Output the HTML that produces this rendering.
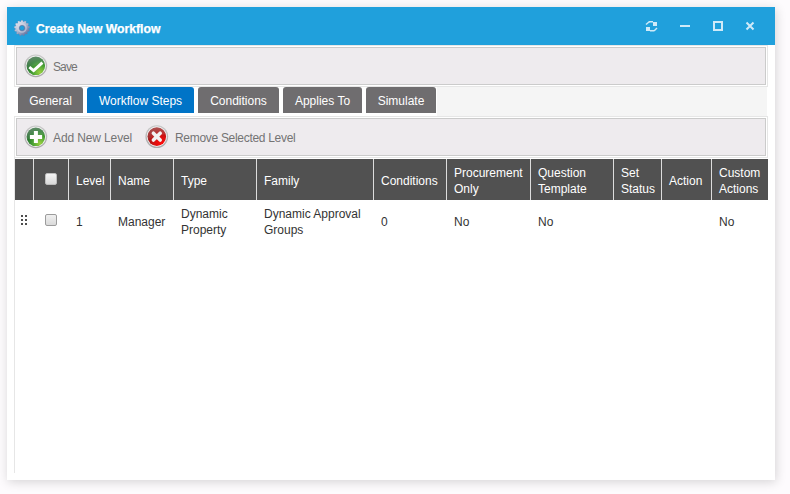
<!DOCTYPE html>
<html><head><meta charset="utf-8">
<style>
*{box-sizing:border-box;margin:0;padding:0}
html,body{width:790px;height:494px;overflow:hidden;background:#fdfbfd;font-family:"Liberation Sans",sans-serif}
.a{position:absolute}
.win{left:7px;top:7px;width:768px;height:473px;background:#fff;box-shadow:1px 2px 10px rgba(0,0,0,0.16)}
.title{left:7px;top:7px;width:768px;height:38px;background:#20a0dc}
.ttext{left:36px;top:21px;font-size:12.2px;font-weight:bold;color:#fff;-webkit-text-stroke:0.25px #fff;line-height:17px;white-space:nowrap}
.outer{border:1px solid #e6e6e6;background:#fff}
.tb{border:1px solid #cbcbcb;background:#eeebee}
.tbtxt{font-size:12px;color:#747474;line-height:14px;white-space:nowrap}
.tab{top:87px;height:26px;background:#6f6d6f;border-radius:3px 3px 0 0;color:#fff;font-size:12px;line-height:28px;text-align:center;white-space:nowrap}
.tab.act{background:#0074c7}
.hdr{left:15px;top:159px;width:753px;height:41px;background:#515151}
.sep{top:159px;width:1px;height:41px;background:#dcdcdc}
.ht{color:#fff;font-size:12px;line-height:16px;white-space:nowrap}
.ct{color:#333;font-size:12px;line-height:16px;white-space:nowrap}
</style></head><body>
<div class="a win"></div>
<div class="a title"></div>
<!-- gear -->
<svg class="a" style="left:14px;top:20px" width="16" height="16" viewBox="0 0 16 16">
<defs><linearGradient id="gg" x1="0.15" y1="0.1" x2="0.85" y2="0.95"><stop offset="0" stop-color="#e6ebf5"/><stop offset="0.5" stop-color="#aab3cc"/><stop offset="1" stop-color="#5a6899"/></linearGradient></defs>
<path fill="url(#gg)" stroke="#6f7ca6" stroke-width="0.5" stroke-opacity="0.5" stroke-linejoin="round" d="M7.17,0.24 L8.83,0.24 L9.03,1.38 L10.16,1.66 L10.87,0.75 L12.34,1.52 L11.99,2.62 L12.86,3.39 L13.91,2.91 L14.85,4.28 L14.03,5.09 L14.45,6.18 L15.60,6.24 L15.80,7.89 L14.70,8.23 L14.56,9.38 L15.55,9.98 L14.96,11.52 L13.82,11.31 L13.16,12.27 L13.76,13.26 L12.52,14.35 L11.62,13.64 L10.59,14.18 L10.66,15.33 L9.05,15.73 L8.58,14.67 L7.42,14.67 L6.95,15.73 L5.34,15.33 L5.41,14.18 L4.38,13.64 L3.48,14.35 L2.24,13.26 L2.84,12.27 L2.18,11.31 L1.04,11.52 L0.45,9.98 L1.44,9.38 L1.30,8.23 L0.20,7.89 L0.40,6.24 L1.55,6.18 L1.97,5.09 L1.15,4.28 L2.09,2.91 L3.14,3.39 L4.01,2.62 L3.66,1.52 L5.13,0.75 L5.84,1.66 L6.97,1.38Z"/>
<circle cx="8" cy="8" r="4.2" fill="none" stroke="#dfe4f0" stroke-width="1.2" opacity="0.5"/>
<circle cx="8" cy="8" r="2.6" fill="#20a0dc" stroke="#5d6b98" stroke-width="0.6"/>
</svg>
<div class="a ttext">Create New Workflow</div>
<!-- title icons -->
<svg class="a" style="left:640px;top:16px" width="125" height="20" viewBox="0 0 125 20">
<g fill="#cfeaf8">
<rect x="13" y="6" width="4" height="4"/>
<rect x="6" y="11" width="4" height="4"/>
<rect x="9" y="5" width="4" height="1.5"/>
<rect x="10" y="14" width="4" height="1.5"/>
<rect x="40" y="9" width="10" height="2"/>
</g>
<g stroke="#cfeaf8" fill="none">
<path d="M6,8.5 L9.5,5.5" stroke-width="1.5"/>
<path d="M14,15 L17,12" stroke-width="1.5"/>
<rect x="74" y="6" width="8" height="8" stroke-width="2"/>
<path d="M106.5,6.5 L113.5,13.5 M113.5,6.5 L106.5,13.5" stroke-width="2"/>
</g>
</svg>

<!-- toolbar 1 -->
<div class="a outer" style="left:14px;top:45px;width:754px;height:42px"></div>
<div class="a tb" style="left:16px;top:47px;width:750px;height:38px"></div>
<svg class="a" style="left:24px;top:54px" width="24" height="24" viewBox="0 0 24 24">
<defs>
<radialGradient id="gr" cx="0.72" cy="0.85" r="0.8"><stop offset="0" stop-color="#9ad040"/><stop offset="0.45" stop-color="#4ea535"/><stop offset="0.8" stop-color="#2a7a30"/><stop offset="1" stop-color="#356f3e"/></radialGradient>
<radialGradient id="rr" cx="0.72" cy="0.85" r="0.8"><stop offset="0" stop-color="#ff0a0a"/><stop offset="0.45" stop-color="#d81010"/><stop offset="0.8" stop-color="#a81818"/><stop offset="1" stop-color="#9a2222"/></radialGradient>
<linearGradient id="gl" x1="0" y1="0" x2="0" y2="1"><stop offset="0" stop-color="#fff" stop-opacity="0.22"/><stop offset="1" stop-color="#fff" stop-opacity="0.05"/></linearGradient>
<linearGradient id="rg" x1="0" y1="0" x2="0" y2="1"><stop offset="0" stop-color="#c8c8c8"/><stop offset="1" stop-color="#a9a9a9"/></linearGradient>
</defs>
<circle cx="11.8" cy="11.8" r="11.4" fill="url(#rg)"/>
<circle cx="11.8" cy="11.8" r="10.1" fill="#f5f5f5"/>
<circle cx="11.8" cy="11.8" r="9.3" fill="url(#gr)"/>
<path d="M2.6,11.8 A9.2,9.2 0 0 1 21,9.2 Q12,10 3,14.5 Z" fill="url(#gl)"/>
<path d="M5.3,13.2 L9.6,16.6 L18.4,8.6" stroke="#fff" stroke-width="2.9" fill="none" stroke-linejoin="miter"/>
</svg>
<div class="a tbtxt" style="left:53px;top:60px;letter-spacing:-0.9px">Save</div>

<!-- tabs -->
<div class="a" style="left:437px;top:87px;width:330px;height:29px;background:#f5f5f5"></div>
<div class="a tab" style="left:18px;width:65px">General</div>
<div class="a tab act" style="left:87px;width:107px">Workflow Steps</div>
<div class="a tab" style="left:198px;width:81px">Conditions</div>
<div class="a tab" style="left:283px;width:79px">Applies To</div>
<div class="a tab" style="left:366px;width:70px">Simulate</div>

<!-- toolbar 2 -->
<div class="a outer" style="left:14px;top:116px;width:754px;height:42px"></div>
<div class="a tb" style="left:16px;top:118px;width:750px;height:38px"></div>
<svg class="a" style="left:24px;top:125px" width="24" height="24" viewBox="0 0 24 24">
<circle cx="11.8" cy="11.8" r="11.4" fill="url(#rg)"/>
<circle cx="11.8" cy="11.8" r="10.1" fill="#f5f5f5"/>
<circle cx="11.8" cy="11.8" r="9.3" fill="url(#gr)"/>
<path d="M2.6,11.8 A9.2,9.2 0 0 1 21,9.2 Q12,10 3,14.5 Z" fill="url(#gl)"/>
<path d="M11.9,5.9 V18.1 M5.9,12 H18.1" stroke="#fff" stroke-width="4" fill="none"/>
</svg>
<div class="a tbtxt" style="left:53px;top:131px;letter-spacing:-0.12px">Add New Level</div>
<svg class="a" style="left:145px;top:125px" width="24" height="24" viewBox="0 0 24 24">
<circle cx="11.8" cy="11.6" r="11.4" fill="url(#rg)"/>
<circle cx="11.8" cy="11.6" r="10.1" fill="#f5f5f5"/>
<circle cx="11.8" cy="11.6" r="9.3" fill="url(#rr)"/>
<path d="M2.6,11.6 A9.2,9.2 0 0 1 21,9 Q12,9.8 3,14.3 Z" fill="url(#gl)"/>
<path d="M8.4,8.2 L15.2,15 M15.2,8.2 L8.4,15" stroke="#f2f2f2" stroke-width="3.6" fill="none" stroke-linecap="round"/>
</svg>
<div class="a tbtxt" style="left:175px;top:131px;letter-spacing:-0.3px">Remove Selected Level</div>

<!-- grid -->
<div class="a" style="left:14px;top:158px;width:1px;height:315px;background:#e6e6e6"></div>
<div class="a hdr"></div>
<div class="a sep" style="left:33px"></div>
<div class="a sep" style="left:68px"></div>
<div class="a sep" style="left:110px"></div>
<div class="a sep" style="left:173px"></div>
<div class="a sep" style="left:256px"></div>
<div class="a sep" style="left:373px"></div>
<div class="a sep" style="left:446px"></div>
<div class="a sep" style="left:530px"></div>
<div class="a sep" style="left:613px"></div>
<div class="a sep" style="left:661px"></div>
<div class="a sep" style="left:711px"></div>
<div class="a" style="left:45px;top:173px;width:12px;height:12px;border-radius:2px;background:linear-gradient(#f4f4f4,#d8d8d8);border:1px solid #bdbdbd"></div>
<div class="a ht" style="left:76px;top:173px">Level</div>
<div class="a ht" style="left:118px;top:173px">Name</div>
<div class="a ht" style="left:181px;top:173px">Type</div>
<div class="a ht" style="left:264px;top:173px">Family</div>
<div class="a ht" style="left:381px;top:173px">Conditions</div>
<div class="a ht" style="left:454px;top:165px">Procurement<br>Only</div>
<div class="a ht" style="left:538px;top:165px">Question<br>Template</div>
<div class="a ht" style="left:621px;top:165px">Set<br>Status</div>
<div class="a ht" style="left:669px;top:173px">Action</div>
<div class="a ht" style="left:719px;top:165px">Custom<br>Actions</div>

<!-- row -->
<svg class="a" style="left:21px;top:215px" width="6" height="10" viewBox="0 0 6 10">
<g fill="#4d4d4d"><rect x="0" y="0" width="2" height="2"/><rect x="4" y="0" width="2" height="2"/><rect x="0" y="4" width="2" height="2"/><rect x="4" y="4" width="2" height="2"/><rect x="0" y="8" width="2" height="2"/><rect x="4" y="8" width="2" height="2"/></g>
</svg>
<div class="a" style="left:45px;top:214px;width:12px;height:12px;border-radius:2px;background:linear-gradient(#f0f0f0,#dadada);border:1px solid #9c9c9c"></div>
<div class="a ct" style="left:76px;top:214px">1</div>
<div class="a ct" style="left:118px;top:214px">Manager</div>
<div class="a ct" style="left:181px;top:206px">Dynamic<br>Property</div>
<div class="a ct" style="left:264px;top:206px">Dynamic Approval<br>Groups</div>
<div class="a ct" style="left:381px;top:214px">0</div>
<div class="a ct" style="left:454px;top:214px">No</div>
<div class="a ct" style="left:538px;top:214px">No</div>
<div class="a ct" style="left:719px;top:214px">No</div>
</body></html>
